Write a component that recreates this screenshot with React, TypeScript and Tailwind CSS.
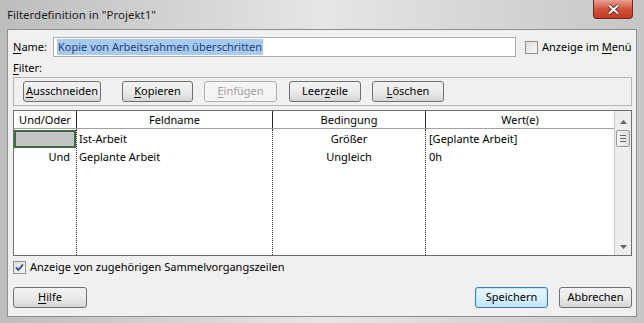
import { ReactNode } from "react";

const font = { fontFamily: '"Noto Sans", "Open Sans", sans-serif' };

function U({ children }: { children: ReactNode }) {
  return <span className="underline underline-offset-2">{children}</span>;
}

function Btn({
  children,
  className = "",
  disabled = false,
  primary = false,
}: {
  children: ReactNode;
  className?: string;
  disabled?: boolean;
  primary?: boolean;
}) {
  let look =
    "border-[#707070] bg-gradient-to-b from-[#f2f2f2] via-[#ebebeb] to-[#d6d6d6] text-black";
  if (disabled) look = "border-[#adb2b5] bg-[#f4f4f4] text-[#a0a0a0]";
  if (primary)
    look =
      "border-[#3c7fb1] bg-gradient-to-b from-[#eaf6fd] via-[#d9f0fc] to-[#bee6fd] text-black shadow-[inset_0_0_0_1px_#c4e5f6]";
  return (
    <div
      className={`h-[21px] flex items-center justify-center rounded-[3px] border text-[11px] shrink-0 ${look} ${className}`}
    >
      {children}
    </div>
  );
}

function Check({ checked }: { checked?: boolean }) {
  return (
    <div className="w-[13px] h-[13px] border border-[#8f8f8f] bg-gradient-to-br from-[#dcdcdc] to-[#fafafa] flex items-center justify-center shrink-0">
      {checked && (
        <svg width="9" height="9" viewBox="0 0 9 9">
          <path d="M1 4.5 L3.5 7 L8 1.5" stroke="#2b4d8f" strokeWidth="1.8" fill="none" />
        </svg>
      )}
    </div>
  );
}

export default function App() {
  return (
    <div
      className="w-[644px] h-[323px] overflow-hidden bg-gradient-to-r from-[#bdbdbd] via-[#e6e6e6] to-[#c6c6c6] flex flex-col text-black"
      style={font}
    >
      <div className="h-[29px] flex items-start shrink-0">
        <div className="pl-[7px] pt-[6px] text-[11.5px] text-[#1e1e1e]">Filterdefinition in "Projekt1"</div>
        <div className="ml-auto mr-[11px] w-[40px] h-[19px] rounded-b-[4px] border border-t-0 border-[#6d2a20] bg-gradient-to-b from-[#e8a090] via-[#d0553f] to-[#c23a22] flex items-center justify-center">
          <svg width="13" height="11" viewBox="0 0 13 11">
            <path d="M2 1.5 L11 9.5 M11 1.5 L2 9.5" stroke="#3a1510" strokeWidth="3.6" />
            <path d="M2 1.5 L11 9.5 M11 1.5 L2 9.5" stroke="#ffffff" strokeWidth="2.2" />
          </svg>
        </div>
      </div>

      <div className="mx-[7px] h-[288px] border border-[#8e8e8e] bg-[#f0f0f0] flex flex-col pl-[5px] pr-[4px] text-[11px]">
        <div className="mt-[7px] h-[20px] flex items-center">
          <div className="w-[40px]">
            <U>N</U>ame:
          </div>
          <div className="w-[463px] h-[20px] border border-[#abadb3] bg-white flex items-center pl-[3px]">
            <span className="bg-[#a6cbef] text-[#1c3f78] leading-[16px] px-px">
              Kopie von Arbeitsrahmen überschritten
            </span>
          </div>
          <div className="ml-[9px] flex items-center gap-[4px] whitespace-nowrap">
            <Check />
            <span>
              Anzeige im <U>M</U>enü
            </span>
          </div>
        </div>

        <div className="h-[21px] flex items-center pt-[2px]">
          <span>
            <U>F</U>ilter:
          </span>
        </div>

        <div className="mt-[-1px] h-[29px] border border-[#b5b5b5] flex items-center pl-[9px]">
          <Btn className="w-[78px]">
            <U>A</U>usschneiden
          </Btn>
          <Btn className="w-[71px] ml-[21px]">
            <U>K</U>opieren
          </Btn>
          <Btn className="w-[73px] ml-[11px]" disabled>
            <U>E</U>infügen
          </Btn>
          <Btn className="w-[72px] ml-[12px]">
            Leer<U>z</U>eile
          </Btn>
          <Btn className="w-[72px] ml-[11px]">
            <U>L</U>öschen
          </Btn>
        </div>

        <div className="mt-[4px] h-[146px] border border-[#6f6f6f] bg-white flex">
          <div className="flex-1 flex flex-col">
            <div className="h-[18px] flex border-b border-[#a0a0a0] items-center">
              <div className="w-[63px] text-center border-r border-[#2a2a2a] h-full leading-[18px]">Und/Oder</div>
              <div className="w-[196px] text-center border-r border-[#2a2a2a] h-full leading-[18px]">Feldname</div>
              <div className="w-[153px] text-center border-r border-[#2a2a2a] h-full leading-[18px]">Bedingung</div>
              <div className="flex-1 text-center leading-[18px]">Wert(e)</div>
            </div>
            <div className="flex-1 flex">
              <div className="w-[63px] border-r border-dotted border-[#2a2a2a] flex flex-col">
                <div className="h-[18px] bg-[#c4c4c4] border-2 border-[#3d6b45] mt-px" />
                <div className="h-[18px] text-right pr-[6px] leading-[18px]">Und</div>
              </div>
              <div className="w-[196px] border-r border-dotted border-[#2a2a2a] flex flex-col pl-[2px]">
                <div className="h-[18px] leading-[18px] mt-px">Ist-Arbeit</div>
                <div className="h-[18px] leading-[18px]">Geplante Arbeit</div>
              </div>
              <div className="w-[153px] border-r border-dotted border-[#2a2a2a] flex flex-col text-center">
                <div className="h-[18px] leading-[18px] mt-px">Größer</div>
                <div className="h-[18px] leading-[18px]">Ungleich</div>
              </div>
              <div className="flex-1 flex flex-col pl-[3px]">
                <div className="h-[18px] leading-[18px] mt-px">[Geplante Arbeit]</div>
                <div className="h-[18px] leading-[18px]">0h</div>
              </div>
            </div>
          </div>
          <div className="w-[17px] border-l border-[#c8c8c8] bg-[#ededed] flex flex-col items-center">
            <div className="h-[17px] flex items-center justify-center mt-[2px]">
              <svg width="7" height="4" viewBox="0 0 7 4">
                <path d="M0 4 L3.5 0 L7 4 Z" fill="#606060" />
              </svg>
            </div>
            <div className="w-[14px] h-[17px] rounded-[2px] border border-[#9a9a9a] bg-gradient-to-r from-[#f4f4f4] to-[#dedede] flex flex-col items-center justify-center gap-[2px]">
              <div className="w-[6px] h-px bg-[#666]" />
              <div className="w-[6px] h-px bg-[#666]" />
              <div className="w-[6px] h-px bg-[#666]" />
            </div>
            <div className="flex-1" />
            <div className="h-[17px] flex items-center justify-center">
              <svg width="7" height="4" viewBox="0 0 7 4">
                <path d="M0 0 L3.5 4 L7 0 Z" fill="#606060" />
              </svg>
            </div>
          </div>
        </div>

        <div className="mt-[5px] h-[13px] flex items-center gap-[4px]">
          <Check checked />
          <span>
            Anzeige <U>v</U>on zugehörigen Sammelvorgangszeilen
          </span>
        </div>

        <div className="mt-[13px] flex items-center">
          <Btn className="w-[74px] h-[20px]">
            <U>H</U>ilfe
          </Btn>
          <Btn className="w-[73px] ml-auto h-[20px]" primary>
            Speichern
          </Btn>
          <Btn className="w-[73px] ml-[11px] h-[20px]">Abbrechen</Btn>
        </div>
      </div>
    </div>
  );
}
